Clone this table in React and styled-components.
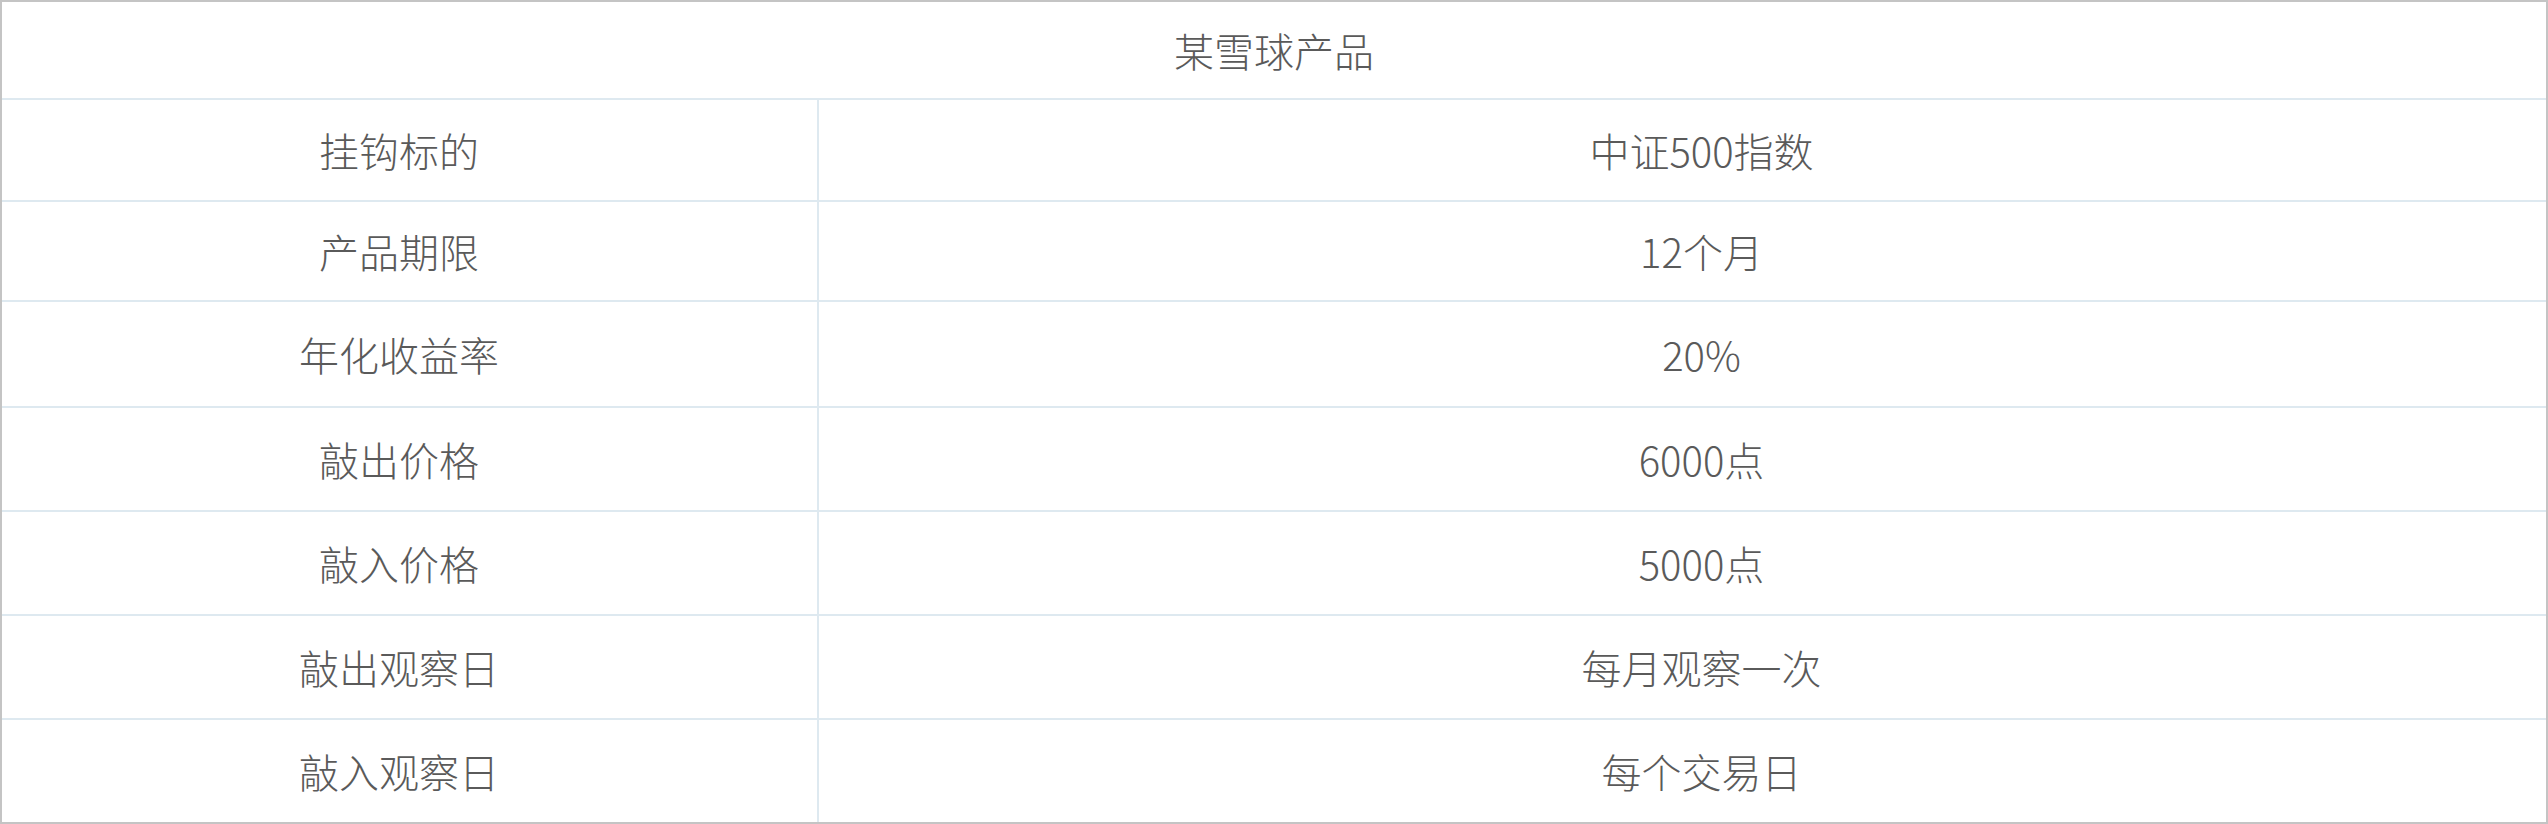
import styled, { createGlobalStyle } from "styled-components";

const GlobalStyle = createGlobalStyle`
  html, body {
    margin: 0;
    padding: 0;
    background: #fff;
  }
  * {
    box-sizing: border-box;
  }
`;

const Table = styled.div`
  width: 2548px;
  height: 824px;
  border: 2px solid #c4c4c4;
  background: #fff;
  display: flex;
  flex-direction: column;
  font-family: "Noto Sans CJK SC", "Noto Sans", sans-serif;
  font-size: 40px;
  font-weight: 300;
  color: #5a5a5a;
`;

const Caption = styled.div`
  height: 98px;
  border-bottom: 2px solid #dee9f0;
  display: flex;
  align-items: center;
  justify-content: center;
`;

const Row = styled.div`
  display: grid;
  grid-template-columns: 817px 1fr;
  height: ${(p) => p.$height + (p.$last ? 0 : 2)}px;
  border-bottom: ${(p) => (p.$last ? "none" : "2px solid #dee9f0")};
`;

const Label = styled.div`
  display: flex;
  align-items: center;
  justify-content: center;
  padding-right: 21px;
  border-right: 2px solid #dee9f0;
`;

const Value = styled.div`
  display: flex;
  align-items: center;
  justify-content: center;
  padding-left: 38px;
`;

const rows = [
  { label: "挂钩标的", value: "中证500指数", height: 100 },
  { label: "产品期限", value: "12个月", height: 98 },
  { label: "年化收益率", value: "20%", height: 104 },
  { label: "敲出价格", value: "6000点", height: 102 },
  { label: "敲入价格", value: "5000点", height: 102 },
  { label: "敲出观察日", value: "每月观察一次", height: 102 },
  { label: "敲入观察日", value: "每个交易日", height: 102 },
];

export default function App() {
  return (
    <>
      <GlobalStyle />
      <Table>
        <Caption>某雪球产品</Caption>
        {rows.map((row, idx) => (
          <Row key={row.label} $height={row.height} $last={idx === rows.length - 1}>
            <Label>{row.label}</Label>
            <Value>{row.value}</Value>
          </Row>
        ))}
      </Table>
    </>
  );
}
